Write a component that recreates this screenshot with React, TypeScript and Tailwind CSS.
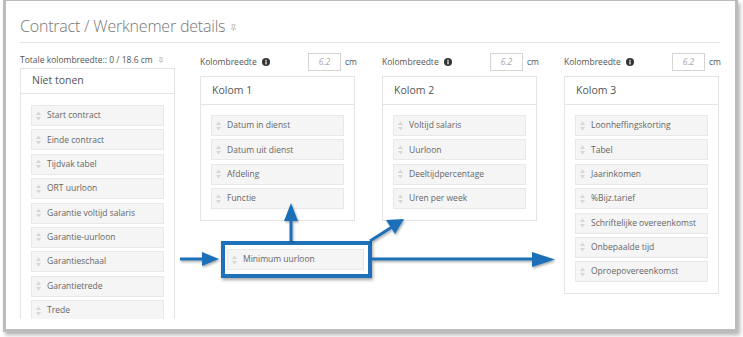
import { Pin } from "lucide-react";

const notShown = [
  "Start contract",
  "Einde contract",
  "Tijdvak tabel",
  "ORT uurloon",
  "Garantie voltijd salaris",
  "Garantie-uurloon",
  "Garantieschaal",
  "Garantietrede",
  "Trede",
];

const columns = [
  { title: "Kolom 1", items: ["Datum in dienst", "Datum uit dienst", "Afdeling", "Functie"] },
  { title: "Kolom 2", items: ["Voltijd salaris", "Uurloon", "Deeltijdpercentage", "Uren per week"] },
  {
    title: "Kolom 3",
    items: [
      "Loonheffingskorting",
      "Tabel",
      "Jaarinkomen",
      "%Bijz.tarief",
      "Schriftelijke overeenkomst",
      "Onbepaalde tijd",
      "Oproepovereenkomst",
    ],
  },
];

function DragHandle() {
  return (
    <svg width="5" height="10" viewBox="0 0 5 10" className="shrink-0">
      <polygon points="2.5,0.5 5,4 0,4" fill="#d6d6d6" />
      <polygon points="0,6 5,6 2.5,9.5" fill="#d6d6d6" />
    </svg>
  );
}

function InfoIcon() {
  return (
    <svg width="8" height="8" viewBox="0 0 8 8" className="shrink-0">
      <circle cx="4" cy="4" r="4" fill="#333" />
      <rect x="3.4" y="3.3" width="1.2" height="3.1" fill="#fff" />
      <circle cx="4" cy="2.2" r="0.7" fill="#fff" />
    </svg>
  );
}

function Item({ label }: { label: string }) {
  return (
    <div className="h-[21px] shrink-0 flex items-center gap-[6px] pl-[4px] bg-[#f5f5f5] border border-[#e8e8e8] text-[8.5px] text-[#666]">
      <DragHandle />
      <span className="whitespace-nowrap">{label}</span>
    </div>
  );
}

export default function App() {
  return (
    <div className="relative w-[743px] h-[337px] bg-white font-['Open_Sans',sans-serif] overflow-hidden">
      <div className="ml-[3px] w-[735px] h-[332px] border-x-[3px] border-b-[3px] border-t border-[#bcbcbc] shadow-[2px_3px_4px_rgba(0,0,0,0.3)] pl-[14px] pt-[13px]">
        <div className="h-[24px] flex items-center gap-[5px]">
          <h1 className="text-[16px] font-light text-[#777] leading-[24px] tracking-[-0.2px]">Contract / Werknemer details</h1>
          <Pin size={7} className="text-[#aaa] mt-[3px]" strokeWidth={2.5} />
        </div>
        <div className="mt-[4px] w-[700px] h-px bg-[#e2e2e2]" />

        <div className="mt-[10px] h-[266px] overflow-hidden flex items-start">
          <div className="w-[155px] mr-[25px] flex flex-col">
            <div className="h-[14px] flex items-center gap-[5px] text-[8.5px] text-[#555]">
              <span>Totale kolombreedte:: 0 / 18.6 cm</span>
              <Pin size={6} className="text-[#aaa]" strokeWidth={2.5} />
            </div>
            <div className="mt-[1px] border border-[#e4e4e4]">
              <div className="h-[25px] flex items-center pl-[11px] border-b border-[#e4e4e4] text-[10.5px] text-[#555]">
                Niet tonen
              </div>
              <div className="px-[10px] pt-[11px] flex flex-col gap-[3.4px]">
                {notShown.map((label) => (
                  <Item key={label} label={label} />
                ))}
              </div>
            </div>
          </div>

          <div className="flex gap-[27px]">
            {columns.map((col) => (
              <div key={col.title} className="w-[155px] flex flex-col">
                <div className="h-[18px] w-[157px] flex items-center text-[8.5px] text-[#555]">
                  <span>Kolombreedte</span>
                  <span className="ml-[5px]">
                    <InfoIcon />
                  </span>
                  <div className="ml-auto w-[33px] h-[18px] border border-[#d4d4d4] flex items-center justify-center italic text-[#aaa]">
                    6.2
                  </div>
                  <span className="ml-[4px]">cm</span>
                </div>
                <div className="mt-[5px] border border-[#e4e4e4]">
                  <div className="h-[28px] flex items-center pl-[11px] border-b border-[#e4e4e4] text-[10.5px] text-[#555]">
                    {col.title}
                  </div>
                  <div className="px-[10px] pt-[10px] pb-[11px] flex flex-col gap-[3.4px]">
                    {col.items.map((label) => (
                      <Item key={label} label={label} />
                    ))}
                  </div>
                </div>
              </div>
            ))}
          </div>
        </div>
      </div>

      {/* annotation: dragged item with arrows */}
      <div className="absolute left-[221px] top-[241px] w-[151px] h-[37px] border-[4px] border-[#1e70b8] bg-white shadow-[1px_2px_3px_rgba(0,0,0,0.35)] flex items-center pl-[2px] pr-[4px]">
        <div className="flex-1">
          <Item label="Minimum uurloon" />
        </div>
      </div>
      <svg className="absolute inset-0 pointer-events-none" width="743" height="337">
        <defs>
          <filter id="sh" x="-20%" y="-20%" width="140%" height="140%">
            <feDropShadow dx="1" dy="1.5" stdDeviation="1" floodColor="#000" floodOpacity="0.35" />
          </filter>
        </defs>
        <g fill="#1e70b8" stroke="#1e70b8" filter="url(#sh)">
          <line x1="180" y1="259" x2="204" y2="259" strokeWidth="3" />
          <polygon points="202,252 219,259 202,266" stroke="none" />
          <line x1="291" y1="241" x2="291" y2="218" strokeWidth="3" />
          <polygon points="284,221 291,203 298,221" stroke="none" />
          <line x1="370" y1="241" x2="392" y2="227" strokeWidth="3" />
          <polygon points="386,220 404,219 395,234" stroke="none" />
          <line x1="372" y1="259" x2="536" y2="259" strokeWidth="3" />
          <polygon points="532,252 555,259.5 532,267" stroke="none" />
        </g>
      </svg>
    </div>
  );
}
